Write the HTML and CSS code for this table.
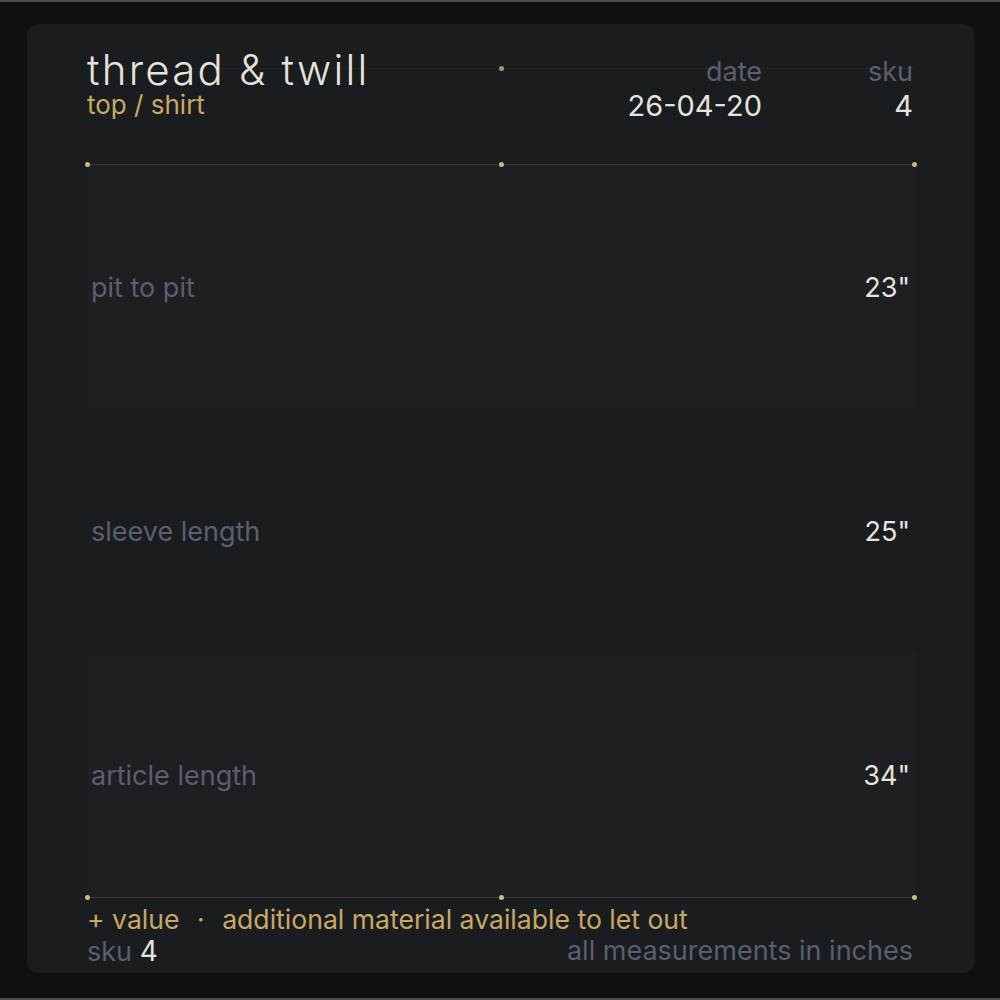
FILE: index.html
```html
<!DOCTYPE html>
<html lang="en">
<head>
  <meta charset="UTF-8">
  <meta name="viewport" content="width=device-width, initial-scale=1">
  <title>thread &amp; twill - measurements</title>
  <link rel="stylesheet" href="styles.css">
</head>
<body>

  <div class="page">
    <div class="card">

      <!-- header -->
      <div class="header">
        <div class="guide"><span class="dot mid"></span></div>
        <div class="brand">
          <h1>thread &amp; twill</h1>
          <p class="kind">top / shirt</p>
        </div>
        <div class="meta">
          <div class="meta-col">
            <span class="meta-label">date</span>
            <span class="meta-value">26-04-20</span>
          </div>
          <div class="meta-col sku-col">
            <span class="meta-label">sku</span>
            <span class="meta-value">4</span>
          </div>
        </div>
      </div>

      <div class="rule">
        <span class="dot start"></span>
        <span class="dot mid"></span>
        <span class="dot end"></span>
      </div>

      <!-- measurements -->
      <div class="rows">
        <div class="row shade">
          <span class="label">pit to pit</span>
          <span class="value">23"</span>
        </div>
        <div class="row">
          <span class="label">sleeve length</span>
          <span class="value">25"</span>
        </div>
        <div class="row shade">
          <span class="label">article length</span>
          <span class="value">34"</span>
        </div>
      </div>

      <div class="rule">
        <span class="dot start"></span>
        <span class="dot mid"></span>
        <span class="dot end"></span>
      </div>

      <!-- footer -->
      <div class="footer">
        <p class="note">+ value <span class="sep">&middot;</span> additional material available to let out</p>
        <div class="footer-line">
          <span class="sku">sku <b>4</b></span>
          <span class="units">all measurements in inches</span>
        </div>
      </div>

    </div>
  </div>

</body>
</html>
```

FILE: styles.css
```css
body {
  margin: 0;
  background: #0e0f11;
  font-family: Inter, "Noto Sans", sans-serif;
}

.page {
  height: 1000px;
  border-top: 2px solid #4b4c4f;
  border-bottom: 2px solid #4b4c4f;
  padding: 22px 25px 0 27px;
  box-sizing: border-box;
}

.card {
  width: 948px;
  background: #1a1d20;
  border-radius: 12px;
  padding: 26px 60px 5px 60px;
  box-sizing: border-box;
}

/* header */
.header {
  position: relative;
  display: flex;
  justify-content: space-between;
  align-items: flex-start;
  margin-bottom: 40px;
}

.guide {
  position: absolute;
  left: 0;
  right: 0;
  top: 18px;
  height: 1px;
  background: rgba(255, 255, 255, 0.035);
}

.brand h1 {
  margin: 0;
  font-size: 42px;
  line-height: 40px;
  font-weight: 300;
  letter-spacing: 2.2px;
  color: #e6e2d7;
}

.kind {
  margin: 2px 0 0;
  font-size: 26px;
  line-height: 26px;
  color: #c9a862;
}

.meta {
  display: flex;
  gap: 106px;
  margin-top: 7px;
}

.meta-col {
  display: flex;
  flex-direction: column;
  align-items: flex-end;
}

.sku-col {
  margin-right: 2px;
}

.meta-label {
  font-size: 27px;
  line-height: 30px;
  color: #5b5f6c;
}

.meta-value {
  font-size: 29px;
  line-height: 37px;
  color: #e6e3dc;
}

/* gold rules with dots */
.rule {
  position: relative;
  height: 1px;
  background: #3f3a31;
}

.dot {
  position: absolute;
  top: -2px;
  width: 5px;
  height: 5px;
  border-radius: 50%;
  background: #d3b878;
}

.dot.start { left: -2px; }
.dot.mid { left: calc(50% - 2px); }
.dot.end { right: -2px; }

.guide .dot.mid {
  background: #a8925d;
}

/* rows */
.row {
  height: 244px;
  display: flex;
  justify-content: space-between;
  align-items: center;
  padding: 0 5px 0 4px;
}

.row.shade {
  background: #1e1f22;
}

.label {
  font-size: 27px;
  color: #5b5f6c;
}

.value {
  font-size: 27px;
  color: #e6e3dc;
}

/* footer */
.footer {
  padding-top: 5px;
}

.note {
  margin: 0;
  font-size: 26.6px;
  line-height: 32px;
  color: #c9a862;
}

.sep {
  margin: 0 10px;
}

.footer-line {
  display: flex;
  justify-content: space-between;
  font-size: 27px;
  line-height: 32px;
  color: #5b5f6c;
}

.sku b {
  font-weight: 400;
  font-size: 28px;
  color: #e6e3dc;
}

.units {
  margin-right: 2px;
}
```
